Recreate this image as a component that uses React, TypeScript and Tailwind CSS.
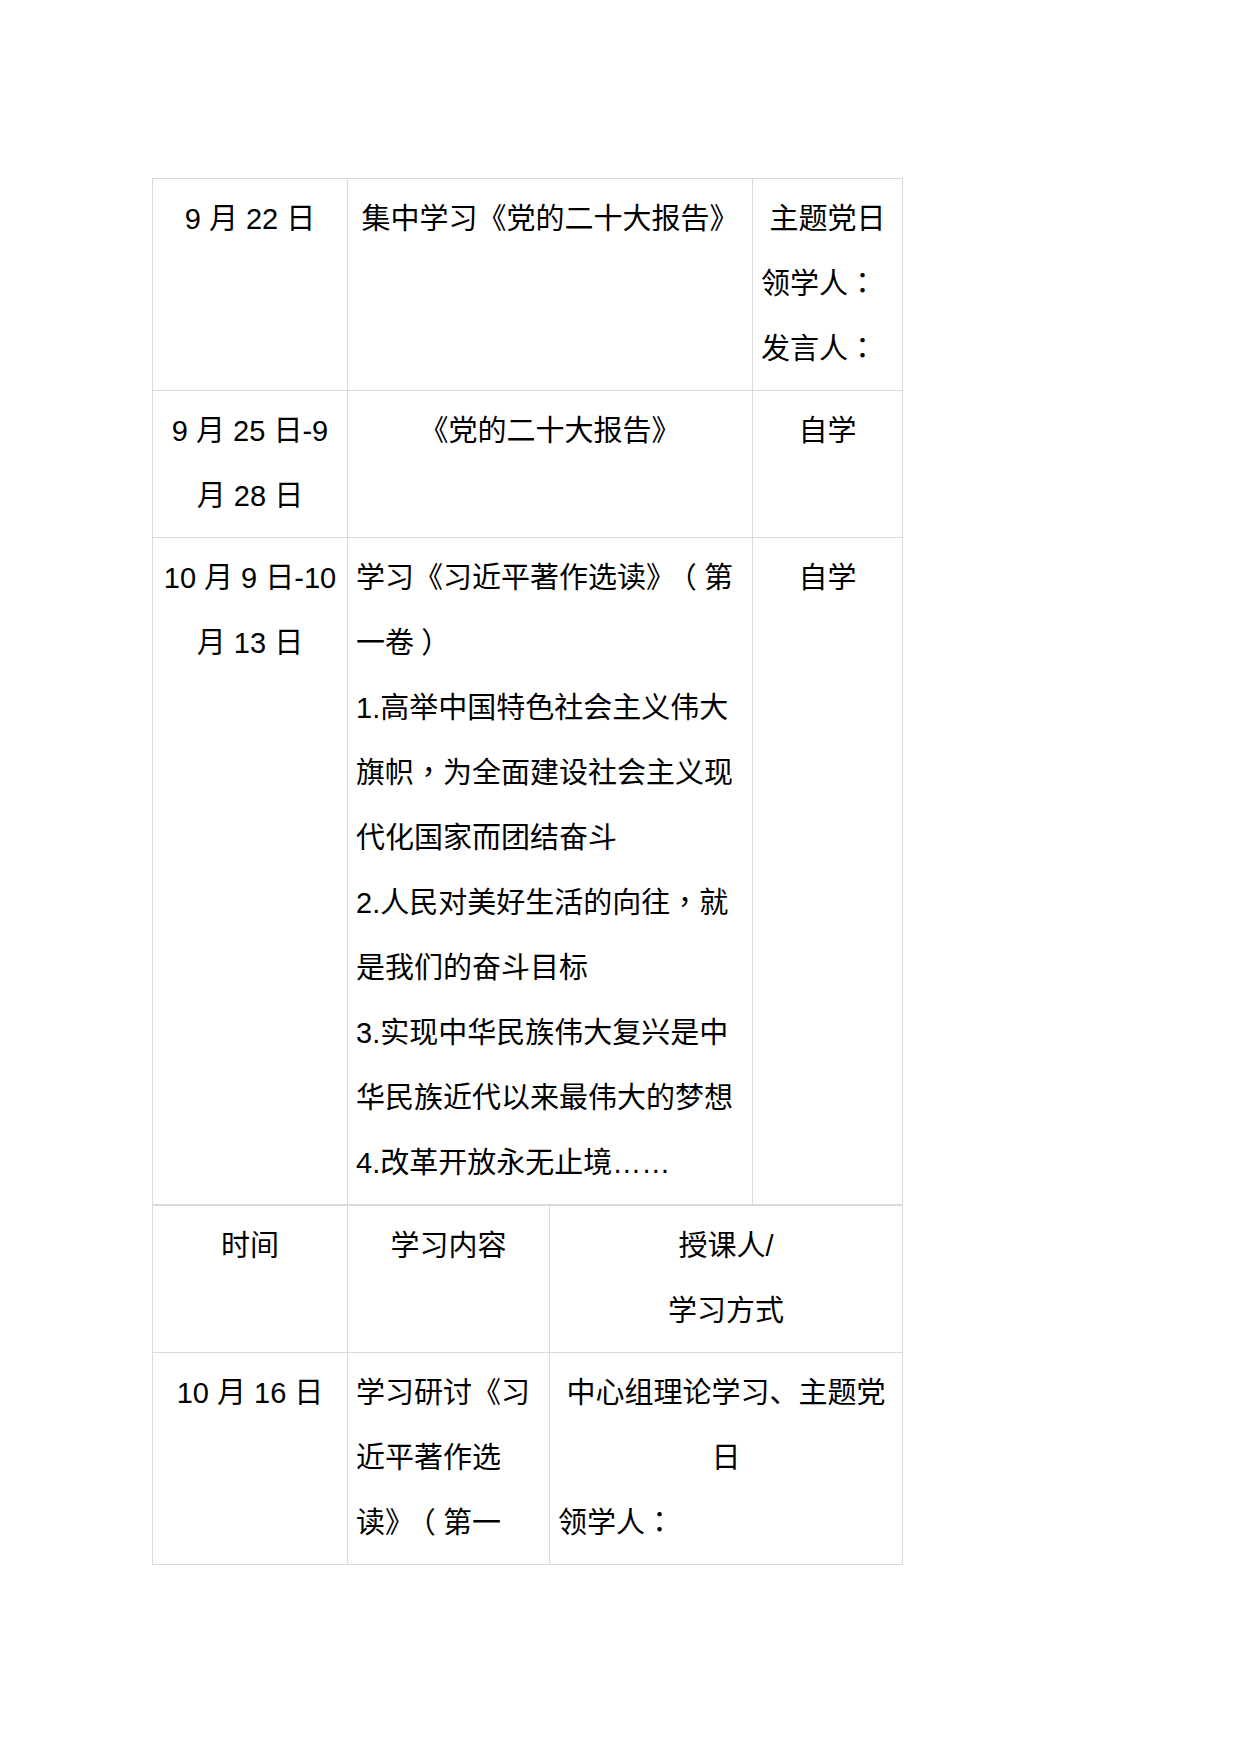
import type { ReactNode } from 'react';

// full-width punctuation sits centered in the reference, as in the TC glyphs
function Pc({ children }: { children: ReactNode }) {
  return <span className="inline-block leading-none font-['Noto_Sans_CJK_TC',sans-serif]">{children}</span>;
}

// parentheses: half-width glyph padded back to a full em, so the ink is centered
function Paren({ children }: { children: ReactNode }) {
  return <span className="px-[0.25em] [font-feature-settings:'halt']">{children}</span>;
}

export default function App() {
  const cell = 'border border-[#dadada] px-2 py-2 align-top leading-[65px]';

  return (
    <div className="min-h-[1754px] bg-white pt-[178px] pl-[152px] font-['Liberation_Sans','Noto_Sans_CJK_SC',sans-serif] text-[29px] text-black">
      {/* Upper schedule */}
      <table className="w-[750px] table-fixed border-collapse">
        <colgroup>
          <col className="w-[195px]" />
          <col className="w-[405px]" />
          <col className="w-[150px]" />
        </colgroup>
        <tbody>
          <tr>
            <td className={`${cell} text-center whitespace-nowrap`}>9 月 22 日</td>
            <td className={`${cell} text-center whitespace-nowrap`}>集中学习《党的二十大报告》</td>
            <td className={`${cell} whitespace-nowrap`}>
              <div className="text-center">主题党日</div>
              <div>领学人<Pc>：</Pc></div>
              <div>发言人<Pc>：</Pc></div>
            </td>
          </tr>
          <tr>
            <td className={`${cell} text-center whitespace-nowrap`}>
              <div>9 月 25 日-9</div>
              <div>月 28 日</div>
            </td>
            <td className={`${cell} text-center whitespace-nowrap`}>《党的二十大报告》</td>
            <td className={`${cell} text-center`}>自学</td>
          </tr>
          <tr>
            <td className={`${cell} text-center whitespace-nowrap`}>
              <div>10 月 9 日-10</div>
              <div>月 13 日</div>
            </td>
            <td className={`${cell} whitespace-nowrap`}>
              <div>学习《习近平著作选读》<Paren>（</Paren>第</div>
              <div>一卷<Paren>）</Paren></div>
              <div>1.高举中国特色社会主义伟大</div>
              <div>旗帜<Pc>，</Pc>为全面建设社会主义现</div>
              <div>代化国家而团结奋斗</div>
              <div>2.人民对美好生活的向往<Pc>，</Pc>就</div>
              <div>是我们的奋斗目标</div>
              <div>3.实现中华民族伟大复兴是中</div>
              <div>华民族近代以来最伟大的梦想</div>
              <div>4.改革开放永无止境……</div>
            </td>
            <td className={`${cell} text-center`}>自学</td>
          </tr>
        </tbody>
      </table>

      {/* Lower schedule */}
      <table className="w-[750px] table-fixed border-collapse">
        <colgroup>
          <col className="w-[195px]" />
          <col className="w-[202px]" />
          <col className="w-[353px]" />
        </colgroup>
        <tbody>
          <tr>
            <td className={`${cell} text-center`}>时间</td>
            <td className={`${cell} text-center`}>学习内容</td>
            <td className={`${cell} text-center`}>
              <div>授课人/</div>
              <div>学习方式</div>
            </td>
          </tr>
          <tr>
            <td className={`${cell} text-center whitespace-nowrap`}>10 月 16 日</td>
            <td className={`${cell} whitespace-nowrap`}>
              <div>学习研讨《习</div>
              <div>近平著作选</div>
              <div>读》<Paren>（</Paren>第一</div>
            </td>
            <td className={`${cell} whitespace-nowrap`}>
              <div className="text-center">中心组理论学习、主题党</div>
              <div className="text-center">日</div>
              <div>领学人<Pc>：</Pc></div>
            </td>
          </tr>
        </tbody>
      </table>
    </div>
  );
}
